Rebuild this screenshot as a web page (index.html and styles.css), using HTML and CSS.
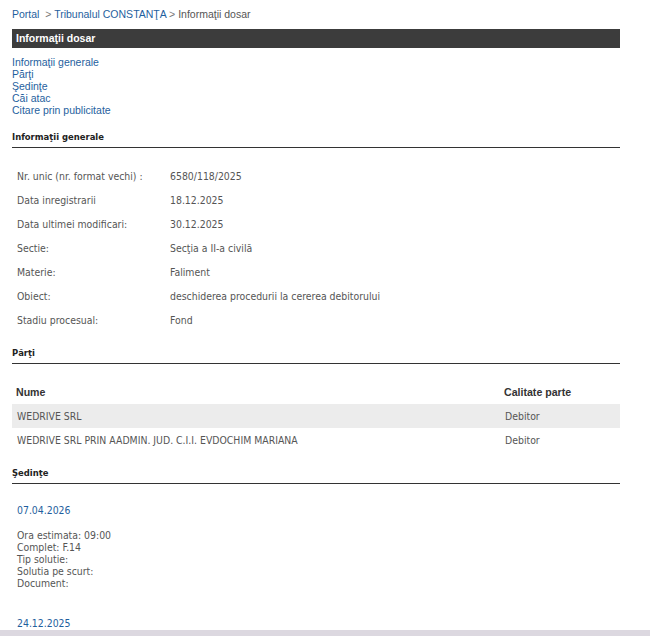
FILE: index.html
```html
<!DOCTYPE html>
<html lang="ro">
<head>
<meta charset="utf-8">
<title>Informaţii dosar</title>
<link rel="stylesheet" href="styles.css">
</head>
<body>
<div class="page">
  <div class="breadcrumb">
    <a href="#">Portal</a>&nbsp; <span class="sep">&gt;</span> <a href="#">Tribunalul CONSTANŢA</a> <span class="sep">&gt;</span> <span class="current">Informaţii dosar</span>
  </div>
  <div class="titlebar">Informaţii dosar</div>
  <ul class="toc">
    <li><a href="#">Informaţii generale</a></li>
    <li><a href="#">Părţi</a></li>
    <li><a href="#">Şedinţe</a></li>
    <li><a href="#">Căi atac</a></li>
    <li><a href="#">Citare prin publicitate</a></li>
  </ul>

  <h2 class="section">Informaţii generale</h2>
  <table class="info">
    <tr><td class="lbl">Nr. unic (nr. format vechi) :</td><td>6580/118/2025</td></tr>
    <tr><td class="lbl">Data inregistrarii</td><td>18.12.2025</td></tr>
    <tr><td class="lbl">Data ultimei modificari:</td><td>30.12.2025</td></tr>
    <tr><td class="lbl">Sectie:</td><td>Secţia a II-a civilă</td></tr>
    <tr><td class="lbl">Materie:</td><td>Faliment</td></tr>
    <tr><td class="lbl">Obiect:</td><td>deschiderea procedurii la cererea debitorului</td></tr>
    <tr><td class="lbl">Stadiu procesual:</td><td>Fond</td></tr>
  </table>

  <h2 class="section">Părţi</h2>
  <table class="parties">
    <thead>
      <tr><th class="name">Nume</th><th class="role">Calitate parte</th></tr>
    </thead>
    <tbody>
      <tr class="alt"><td>WEDRIVE SRL</td><td class="role">Debitor</td></tr>
      <tr><td>WEDRIVE SRL PRIN AADMIN. JUD. C.I.I. EVDOCHIM MARIANA</td><td class="role">Debitor</td></tr>
    </tbody>
  </table>

  <h2 class="section">Şedinţe</h2>
  <div class="hearing">
    <div class="date">07.04.2026</div>
    <div class="details">
      <div>Ora estimata: 09:00</div>
      <div>Complet: F.14</div>
      <div>Tip solutie:</div>
      <div>Solutia pe scurt:</div>
      <div>Document:</div>
    </div>
  </div>
  <div class="hearing">
    <div class="date">24.12.2025</div>
  </div>
</div>
<div class="bottombar"></div>
</body>
</html>
```

FILE: styles.css
```css
html, body {
  margin: 0;
  padding: 0;
  background: #ffffff;
}
body {
  font-family: "Liberation Sans", Arial, sans-serif;
  font-size: 11px;
  color: #555;
}
.page {
  width: 608px;
  padding: 8px 0 0 12px;
}
a {
  color: #1f5f9e;
  text-decoration: none;
}
.breadcrumb {
  font-size: 10.5px;
  line-height: 12px;
  color: #666;
}
.breadcrumb .sep { color: #777; }
.breadcrumb .current { color: #555; }
.titlebar {
  margin-top: 9px;
  height: 19px;
  line-height: 19px;
  background: #3c3c3c;
  color: #fff;
  font-weight: bold;
  font-size: 10.5px;
  padding-left: 4px;
}
.toc {
  list-style: none;
  margin: 8px 0 0;
  padding: 0;
  line-height: 12px;
  font-size: 10.5px;
}
.section {
  font-family: "DejaVu Sans Condensed", "DejaVu Sans", sans-serif;
  font-stretch: condensed;
  font-size: 9.4px;
  font-weight: bold;
  color: #222;
  margin: 15px 0 0;
  line-height: 12px;
  padding-bottom: 4px;
  border-bottom: 1px solid #333;
}
.info {
  border-collapse: collapse;
  margin-top: 16px;
  font-family: "DejaVu Sans Condensed", "DejaVu Sans", sans-serif;
  font-stretch: condensed;
  font-size: 10.4px;
  color: #555;
}
.info td {
  height: 24px;
  padding: 0 5px;
  white-space: nowrap;
}
.info td.lbl { width: 143px; }
.parties {
  width: 608px;
  border-collapse: collapse;
  margin-top: 16px;
  margin-bottom: 13px;
  font-family: "DejaVu Sans Condensed", "DejaVu Sans", sans-serif;
  font-stretch: condensed;
  font-size: 10.4px;
  color: #555;
}
.parties th {
  font-family: "Liberation Sans", Arial, sans-serif;
  font-size: 10.6px;
  font-weight: bold;
  color: #333;
  text-align: left;
  height: 24px;
  padding: 0 4px;
}
.parties td {
  height: 24px;
  padding: 0 5px;
}
.parties td.name-cell { letter-spacing: 0.2px; }
.parties .role { width: 110px; }
.parties th.role { width: 112px; }
.parties tr.alt td { background: #ececec; }
.hearing {
  margin-top: 19px;
  padding-left: 5px;
  font-family: "DejaVu Sans Condensed", "DejaVu Sans", sans-serif;
  font-stretch: condensed;
  font-size: 10.4px;
}
.hearing + .hearing { margin-top: 27px; }
.hearing .date {
  color: #1f5f9e;
  line-height: 14px;
}
.hearing .details {
  margin-top: 12px;
  line-height: 12px;
  color: #555;
}
.bottombar {
  position: fixed;
  left: 0;
  right: 0;
  bottom: 0;
  height: 6px;
  background: #dcd8e0;
}
```
